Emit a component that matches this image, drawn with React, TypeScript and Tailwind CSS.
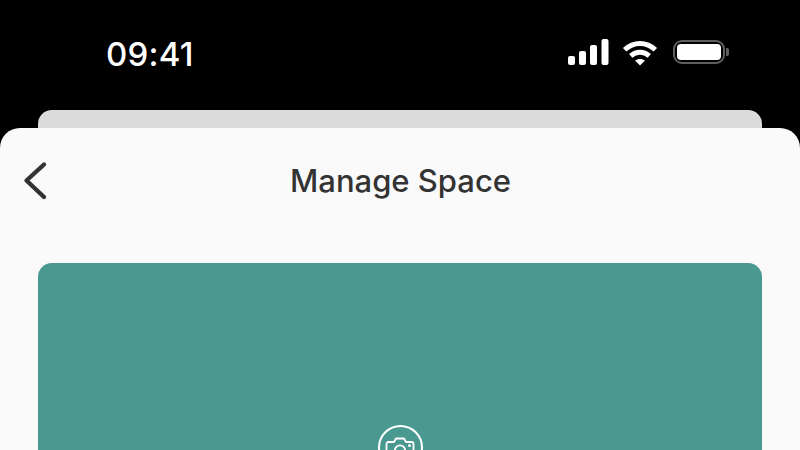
function SignalIcon() {
  return (
    <svg width="41" height="26" viewBox="0 0 41 26" fill="#fff">
      <rect x="0" y="17" width="7" height="9" rx="2" />
      <rect x="11" y="12" width="7" height="14" rx="2" />
      <rect x="22" y="6" width="7" height="20" rx="2" />
      <rect x="33.5" y="0" width="7" height="26" rx="2" />
    </svg>
  );
}

function WifiIcon() {
  return (
    <svg className="ml-[12px] mt-[2px]" width="38" height="26" viewBox="0 0 38 28" fill="none" stroke="#fff" strokeWidth="5.4">
      <path d="M2.5 10.5C12 1.5 26 1.5 35.5 10.5" />
      <path d="M9 17C14.8 11.8 23.2 11.8 29 17" />
      <path d="M19 27.5L13.6 22.2C16.6 19.8 21.4 19.8 24.4 22.2Z" fill="#fff" stroke="none" />
    </svg>
  );
}

function BatteryIcon() {
  return (
    <div className="ml-[14px] flex items-center gap-[1px]">
      <div className="flex h-[24px] w-[52px] items-center justify-center rounded-[9px] border-[2.5px] border-[#5f5f5f] p-[2px]">
        <div className="h-full w-full rounded-[4px] bg-white" />
      </div>
      <div className="h-[8px] w-[3px] rounded-r-[2px] bg-[#5f5f5f]" />
    </div>
  );
}

function BackIcon() {
  return (
    <svg width="26" height="40" viewBox="0 0 26 40" fill="none" stroke="#333333" strokeWidth="4.4" strokeLinecap="round" strokeLinejoin="round">
      <path d="M22 3.5L4.5 19.5L22 36" />
    </svg>
  );
}

function CameraIcon() {
  return (
    <svg width="30" height="26" viewBox="0 0 30 26" fill="none" stroke="#fff" strokeWidth="1.8" strokeLinejoin="round">
      <path d="M3.5 7H9L11 3.5H19L21 7H26.5C27.6 7 28.5 7.9 28.5 9V23C28.5 24.1 27.6 25 26.5 25H3.5C2.4 25 1.5 24.1 1.5 23V9C1.5 7.9 2.4 7 3.5 7Z" />
      <circle cx="15" cy="15.5" r="5.2" />
      <circle cx="24.5" cy="10.5" r="0.6" fill="#fff" />
    </svg>
  );
}

export default function App() {
  return (
    <div className="flex h-[450px] w-[800px] flex-col overflow-hidden bg-black font-['Inter',sans-serif]">
      <div className="flex h-[110px] shrink-0 items-start justify-between pl-[106px] pr-[71px] pt-[35px]">
        <span className="text-[33px] font-medium leading-[39px] tracking-[0.2px] text-white">09:41</span>
        <div className="flex items-center pt-[3px]">
          <SignalIcon />
          <WifiIcon />
          <BatteryIcon />
        </div>
      </div>

      <div className="mx-[38px] h-[18px] shrink-0 rounded-t-[14px] bg-[#dbdbdb]" />

      <div className="flex h-[400px] shrink-0 flex-col rounded-t-[20px] bg-[#fafafa]">
        <div className="relative flex h-[135px] shrink-0 items-start justify-center pl-[1px] pt-[34px]">
          <div className="absolute left-[22px] top-[33px]">
            <BackIcon />
          </div>
          <h1 className="text-[31px] font-medium leading-[38px] text-[#333333]">Manage Space</h1>
        </div>
        <div className="mx-[38px] flex h-[300px] shrink-0 justify-center rounded-[14px] bg-[#4a9990] pt-[162px]">
          <div className="flex h-[45px] w-[45px] items-center justify-center rounded-full border-2 border-white">
            <CameraIcon />
          </div>
        </div>
      </div>
    </div>
  );
}
